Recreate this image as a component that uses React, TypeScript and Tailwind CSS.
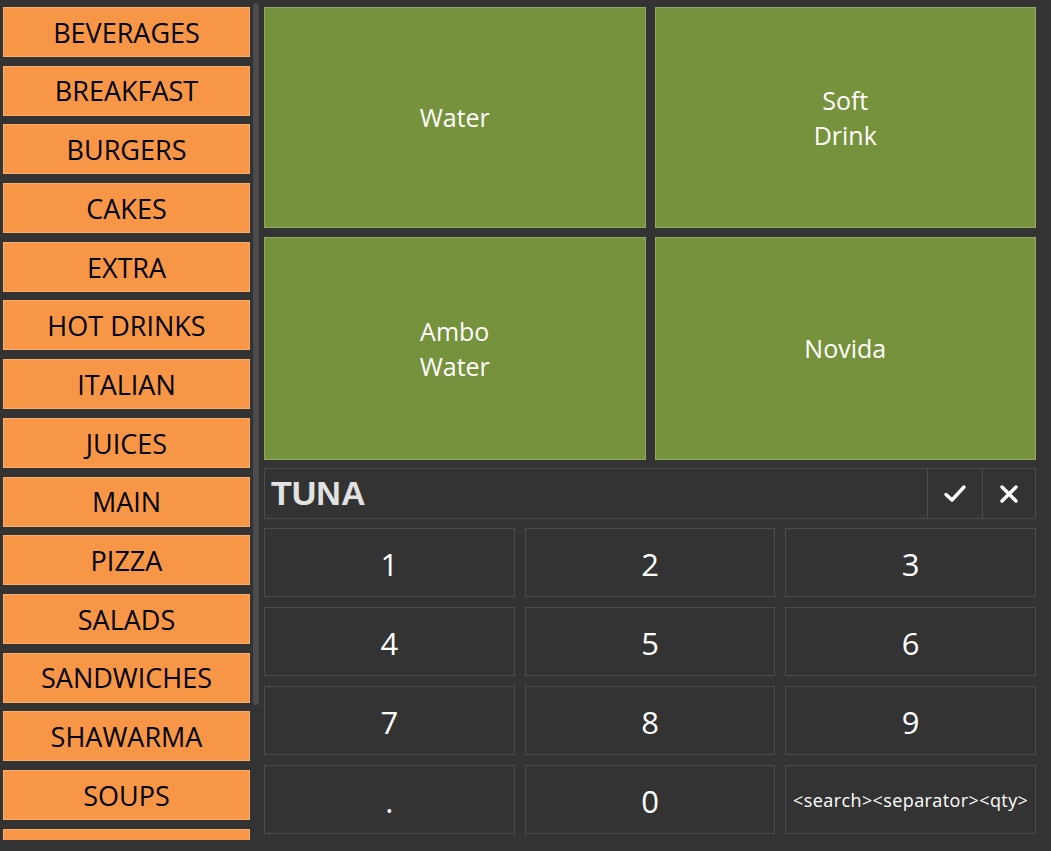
import React from "react";

const categories = [
  "BEVERAGES",
  "BREAKFAST",
  "BURGERS",
  "CAKES",
  "EXTRA",
  "HOT DRINKS",
  "ITALIAN",
  "JUICES",
  "MAIN",
  "PIZZA",
  "SALADS",
  "SANDWICHES",
  "SHAWARMA",
  "SOUPS",
  "",
];

const keys = ["1", "2", "3", "4", "5", "6", "7", "8", "9", ".", "0", "<search><separator><qty>"];

export default function App() {
  return (
    <div
      className="w-[1051px] h-[851px] bg-[#333333] flex overflow-hidden"
      style={{ fontFamily: '"Open Sans", "Noto Sans", sans-serif' }}
    >
      {/* Left category list */}
      <div className="relative w-[264px] h-[840px] shrink-0">
        <div className="h-[840px] overflow-hidden pl-[3px] pt-[7px] w-[250px] flex flex-col gap-[8.7px]">
          {categories.map((c, i) => (
            <div
              key={i}
              className="h-[50px] shrink-0 bg-[#f79646] border border-[#f9ad6b] flex items-center justify-center pt-[2px] text-black text-[27px]"
            >
              {c}
            </div>
          ))}
        </div>
        <div className="absolute left-[253px] top-[3px] w-[6px] h-[702px] rounded-full bg-[#4b4b4b]" />
      </div>

      {/* Right area */}
      <div className="w-[772px] pt-[7px] flex flex-col">
        <div className="grid grid-cols-2 gap-[9px]">
          <Tile lines={["Water"]} h="h-[221px]" />
          <Tile lines={["Soft", "Drink"]} h="h-[221px]" />
        </div>
        <div className="grid grid-cols-2 gap-[9px] mt-[9px]">
          <Tile lines={["Ambo", "Water"]} h="h-[223px]" />
          <Tile lines={["Novida"]} h="h-[223px]" />
        </div>

        <div className="mt-[8px] h-[51px] border border-[#4d4d4d] flex">
          <div
            className="flex-1 flex items-center pl-[6px] text-[#e2e2e2] text-[34px] font-bold"
            style={{ fontFamily: '"Liberation Sans", Arial, sans-serif' }}
          >
            TUNA
          </div>
          <div className="w-[55px] border-l border-[#4d4d4d] flex items-center justify-center">
            <svg width="24" height="20" viewBox="0 0 24 20">
              <path d="M3 10.5 L9 16 L21 3" fill="none" stroke="white" strokeWidth="3.4" strokeLinecap="round" strokeLinejoin="round" />
            </svg>
          </div>
          <div className="w-[53px] border-l border-[#4d4d4d] flex items-center justify-center">
            <svg width="20" height="20" viewBox="0 0 20 20">
              <path d="M3 3 L17 17 M17 3 L3 17" fill="none" stroke="white" strokeWidth="3.4" strokeLinecap="round" />
            </svg>
          </div>
        </div>

        <div className="mt-[9px] grid grid-cols-3 gap-x-[10px] gap-y-[10px]">
          {keys.map((k) => (
            <div
              key={k}
              className={`h-[69px] border border-[#4d4d4d] flex items-center justify-center text-white ${
                k.length > 2 ? "text-[18px] tracking-[0.4px] pt-[2px]" : "text-[31px] pt-[4px]"
              }`}
            >
              {k}
            </div>
          ))}
        </div>
      </div>
    </div>
  );
}

function Tile({ lines, h }: { lines: string[]; h: string }) {
  return (
    <div
      className={`${h} bg-[#76923c] border border-[#8fa862] flex flex-col items-center justify-center text-white text-[25px] leading-[35px]`}
    >
      {lines.map((l) => (
        <div key={l}>{l}</div>
      ))}
    </div>
  );
}
